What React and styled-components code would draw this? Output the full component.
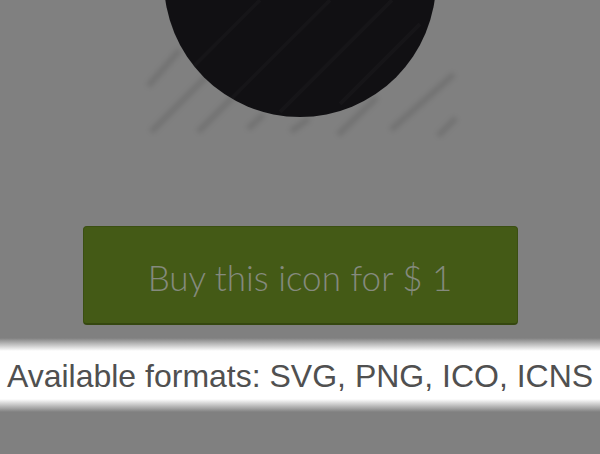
import styled, { createGlobalStyle } from 'styled-components'

const GlobalStyle = createGlobalStyle`
    html, body{
        margin: 0;
        padding: 0;
        background: #808080;
    }
    #root{
        height: 454px;
        overflow: hidden;
    }
`;

const stripes = [
    [150, 84, 178, 52],
    [153, 130, 205, 78],
    [200, 130, 232, 98],
    [250, 127, 262, 116],
    [293, 130, 307, 120],
    [340, 133, 375, 99],
    [393, 128, 452, 76],
    [440, 134, 454, 120],
];

const innerStripes = [
    [190, 70, 260, 0],
    [230, 100, 330, 0],
    [280, 112, 392, 0],
    [340, 104, 420, 24],
];

const IconPreview = () => (
    <PreviewSvg viewBox="0 0 600 160" width="600" height="160">
        <defs>
            <filter id="soft" x="-30%" y="-30%" width="160%" height="160%">
                <feGaussianBlur stdDeviation="2.4" />
            </filter>
            <clipPath id="disc">
                <circle cx="300" cy="-19" r="136" />
            </clipPath>
        </defs>
        <g filter="url(#soft)" stroke="rgba(0,0,0,0.11)" strokeWidth="6" strokeLinecap="round">
            {stripes.map(([x1, y1, x2, y2], i) => (
                <line key={i} x1={x1} y1={y1} x2={x2} y2={y2} />
            ))}
        </g>
        <circle cx="300" cy="-19" r="136" fill="#111013" />
        <g clipPath="url(#disc)" stroke="rgba(255,255,255,0.025)" strokeWidth="4">
            {innerStripes.map(([x1, y1, x2, y2], i) => (
                <line key={i} x1={x1} y1={y1} x2={x2} y2={y2} />
            ))}
        </g>
    </PreviewSvg>
);

const App = () => {
    return(
        <Page>
            <GlobalStyle />
            <IconPreview />
            <BuyButton>Buy this icon for $ 1</BuyButton>
            <Formats>
                <p>Available formats: SVG, PNG, ICO, ICNS</p>
            </Formats>
        </Page>
    )
}

const Page = styled.div`
    display: flex;
    flex-direction: column;
    align-items: center;
    width: 600px;
    height: 454px;
    background: #808080;
`;

const PreviewSvg = styled.svg`
    display: block;
    flex-shrink: 0;
`;

const BuyButton = styled.button`
    margin-top: 66px;
    width: 435px;
    height: 99px;
    flex-shrink: 0;
    background: #445a16;
    border: 1px solid #3b4f12;
    border-bottom: 2px solid #354710;
    border-radius: 4px;
    color: #858a7e;
    font-family: Lato, "Open Sans", sans-serif;
    font-weight: 300;
    font-size: 35px;
    padding: 0;
    padding-top: 4px;
    cursor: pointer;
`;

const Formats = styled.div`
    margin-top: 13px;
    width: 100%;
    height: 74px;
    display: flex;
    align-items: center;
    justify-content: center;
    background: linear-gradient(
        to bottom,
        #808080 0px,
        #ffffff 13px,
        #ffffff 61px,
        #808080 74px
    );
    p{
        margin: 0;
        font-family: "Liberation Sans", Arial, sans-serif;
        font-size: 32px;
        color: #505050;
        white-space: nowrap;
        padding-top: 2px;
    }
`;

export default App;
